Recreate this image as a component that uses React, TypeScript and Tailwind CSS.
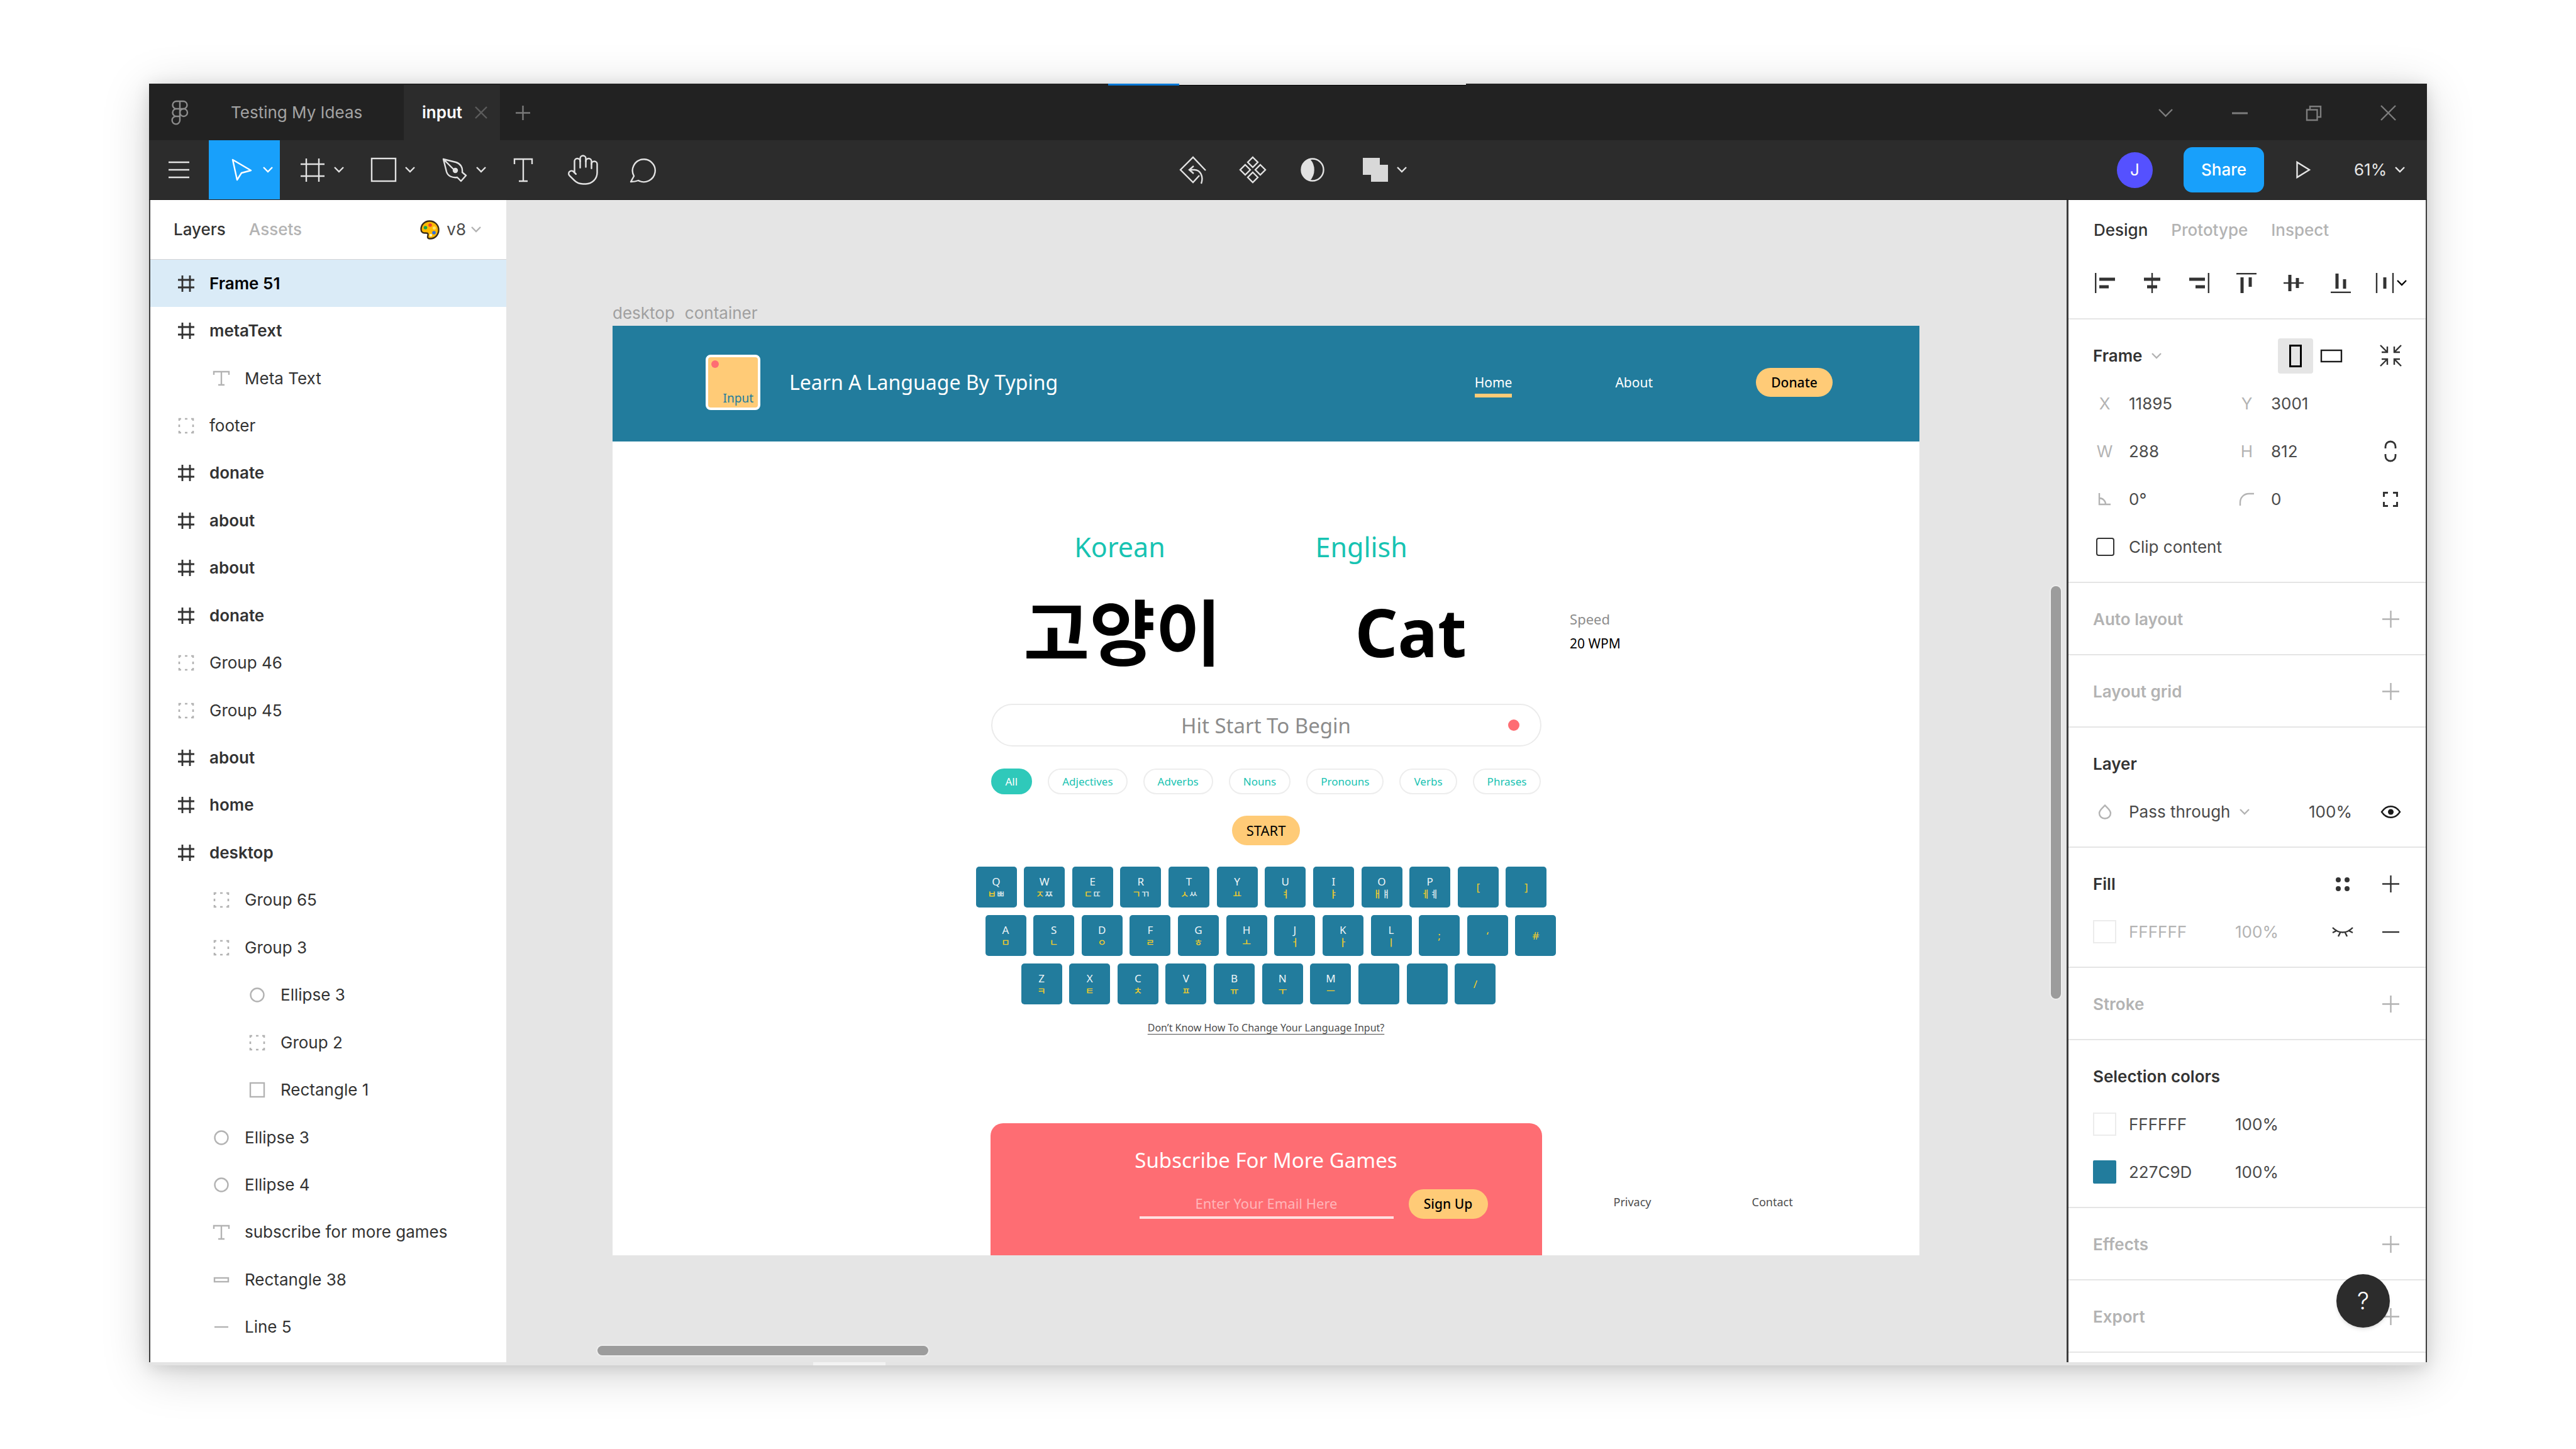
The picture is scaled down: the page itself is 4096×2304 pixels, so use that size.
import type { ReactNode } from "react";
import { Hand } from "lucide-react";

/* ---------- icons ---------- */

type IconProps = { w: number; h: number; children: ReactNode; className?: string; stroke?: number };

function Icon({ w, h, children, className = "", stroke = 2.4 }: IconProps) {
  return (
    <svg
      width={w}
      height={h}
      viewBox={`0 0 ${w} ${h}`}
      fill="none"
      stroke="currentColor"
      strokeWidth={stroke}
      aria-hidden="true"
      className={`shrink-0 overflow-visible ${className}`}
    >
      {children}
    </svg>
  );
}

const Chevron = ({ className = "" }: { className?: string }) => (
  <Icon w={16} h={10} className={className}>
    <path d="M1 1l7 7 7-7" />
  </Icon>
);

const FigmaLogo = () => (
  <Icon w={26} h={39} className="text-[#8c8c8c]">
    <path d="M13 1H7.500a6 6 0 0 0 0 12H13ZM13 1h5.500a6 6 0 0 1 0 12H13M13 13H7.500a6 6 0 0 0 0 12H13ZM13 25H7.500A6.200 6.200 0 1 0 13 31.500Z" />
    <circle cx="19" cy="19" r="6" />
  </Icon>
);

const FrameIcon = ({ big = false }: { big?: boolean }) =>
  big ? (
    <Icon w={38} h={37}>
      <path d="M9 0v37M29 0v37M0 9h38M0 28h38" />
    </Icon>
  ) : (
    <Icon w={26} h={26} stroke={2.8}>
      <path d="M7 0v26M19 0v26M0 7h26M0 19h26" />
    </Icon>
  );

const TextIcon = () => (
  <Icon w={26} h={23}>
    <path d="M1 6V1h24v5M13 1v21M8 22h10" />
  </Icon>
);

const GroupIcon = () => (
  <Icon w={24} h={24} stroke={2.6}>
    <path d="M1 4V1h3M10 1h4M20 1h3v3M23 10v4M23 20v3h-3M14 23h-4M4 23H1v-3M1 14v-4" />
  </Icon>
);

const EllipseIcon = () => (
  <Icon w={24} h={24}>
    <circle cx="12" cy="12" r="10.500" />
  </Icon>
);

const RectIcon = () => (
  <Icon w={24} h={24}>
    <rect x="1" y="1" width="22" height="22" />
  </Icon>
);

const FlatRectIcon = () => (
  <Icon w={24} h={8}>
    <rect x="1" y="1" width="22" height="6" />
  </Icon>
);

const LineIcon = () => (
  <Icon w={22} h={2}>
    <path d="M0 1h22" />
  </Icon>
);

const Plus = () => (
  <Icon w={27} h={27}>
    <path d="M13.500 0v27M0 13.500h27" />
  </Icon>
);

const Palette = () => (
  <svg width="31" height="31" viewBox="0 0 31 31" aria-hidden="true" className="shrink-0">
    <path
      d="M15 1.500C7 1.500 1.500 7.500 1.500 14.500c0 4 2.500 6 5.500 6 2.500 0 5-.6 5.500 1.500.4 2-.5 3-.5 5 0 1.700 1.500 2.500 4 2.500C24 29.500 29.500 23 29.500 15.500 29.500 7.500 23 1.500 15 1.500Z"
      fill="#ffb900"
      stroke="#3a2d1a"
      strokeWidth="2.400"
    />
    <circle cx="8.500" cy="12" r="2.800" fill="#16a34a" />
    <circle cx="16" cy="8" r="2.800" fill="#f0442c" />
    <circle cx="22.500" cy="12.500" r="2.600" fill="#ffe066" />
    <circle cx="22" cy="20" r="2.800" fill="#2f6fe0" />
    <circle cx="17" cy="24" r="2.200" fill="#fff3c4" />
  </svg>
);

/* ---------- title bar and toolbar ---------- */

function TabBar() {
  return (
    <div className="relative flex h-[90px] items-stretch bg-[#222222] text-[26px] leading-8">
      <div aria-hidden="true" className="absolute left-[1525px] top-0 flex h-[3px] w-[569px]">
        <span className="h-full w-[113px] bg-[#0078d7]" />
        <span className="h-full flex-1 border-b border-black bg-[#e4e4e4]" />
      </div>
      <button aria-label="Home" className="flex w-[98px] items-center justify-center pt-[2px]">
        <FigmaLogo />
      </button>
      <button className="w-[307px] pl-8 pt-[2px] text-left text-[#a3a3a3]">Testing My Ideas</button>
      <div className="mt-[2px] flex w-[153px] items-center gap-5 bg-[#2c2c2c] pl-[29px]">
        <button className="font-semibold text-white">input</button>
        <button aria-label="Close tab" className="text-[#5c5c5c]">
          <Icon w={20} h={20}>
            <path d="M1 1l18 18M19 1L1 19" />
          </Icon>
        </button>
      </div>
      <button aria-label="New tab" className="flex w-[72px] items-center justify-center pt-[2px] text-[#7a7a7a]">
        <Icon w={23} h={23}>
          <path d="M11.500 0v23M0 11.500h23" />
        </Icon>
      </button>
      <div className="ml-auto flex items-center pr-[3px] pt-[3px] text-[#7d7d7d]">
        <button aria-label="Tab list" className="flex w-[118px] justify-center">
          <Icon w={23} h={13}>
            <path d="M1 1l10.500 10.500L22 1" />
          </Icon>
        </button>
        <button aria-label="Minimize" className="flex h-8 w-[118px] items-center justify-center">
          <Icon w={25} h={2} stroke={3}>
            <path d="M0 1h25" />
          </Icon>
        </button>
        <button aria-label="Restore" className="flex w-[118px] justify-center">
          <Icon w={24} h={24}>
            <path d="M1 6.500h16.500V23H1ZM6 6V1.200h17V18h-5" />
          </Icon>
        </button>
        <button aria-label="Close window" className="flex w-[118px] justify-center">
          <Icon w={25} h={25}>
            <path d="M1 1l23 23M24 1L1 24" />
          </Icon>
        </button>
      </div>
    </div>
  );
}

function ToolWithMenu({ label, active = false, children }: { label: string; active?: boolean; children: ReactNode }) {
  return (
    <button
      aria-label={label}
      className={`flex w-[113px] items-center ${active ? "bg-[#18a0fb] text-white" : "text-[#e2e2e2]"}`}
    >
      <span className="ml-[30px] flex w-11 justify-center">{children}</span>
      <Chevron className="ml-3" />
    </button>
  );
}

function Tool({ label, children }: { label: string; children: ReactNode }) {
  return (
    <button aria-label={label} className="flex w-[95px] items-center justify-center text-[#e2e2e2]">
      {children}
    </button>
  );
}

function Toolbar() {
  return (
    <div className="flex h-[95px] items-stretch justify-between border-b border-[#1c1c1c] bg-[#2c2c2c]">
      <div className="flex flex-1">
        <Tool label="Main menu">
          <Icon w={33} h={28}>
            <path d="M0 2h33M0 14h33M0 26h33" />
          </Icon>
        </Tool>
        <ToolWithMenu label="Move" active>
          <Icon w={31} h={34}>
            <path d="M1 1l29 17-15 4-7 11Z" strokeLinejoin="round" />
          </Icon>
        </ToolWithMenu>
        <ToolWithMenu label="Frame">
          <FrameIcon big />
        </ToolWithMenu>
        <ToolWithMenu label="Rectangle">
          <Icon w={40} h={38}>
            <rect x="1" y="1" width="38" height="36" />
          </Icon>
        </ToolWithMenu>
        <ToolWithMenu label="Pen">
          <Icon w={38} h={37}>
            <path d="M1 1l20 5c7 2 11 8 10 16l6 5-8 9-6-6C15 31 8 28 6 21ZM1 1l17 17" strokeLinejoin="round" />
            <circle cx="20" cy="19" r="3" fill="currentColor" />
          </Icon>
        </ToolWithMenu>
        <Tool label="Text">
          <Icon w={30} h={37}>
            <path d="M1 9V1h28v8M15 1v35M8 36h14" />
          </Icon>
        </Tool>
        <Tool label="Hand">
          <Hand size={54} strokeWidth={1.1} aria-hidden="true" />
        </Tool>
        <Tool label="Comment">
          <Icon w={42} h={39}>
            <path d="M2 38l5-9a18 18 0 1 1 7 7q-5 2-12 2Z" strokeLinejoin="round" />
          </Icon>
        </Tool>
      </div>
      <div className="flex pl-9">
        <Tool label="Reset instance">
          <Icon w={42} h={42}>
            <path d="M41 22L21 1 1 21l20 20 10-11M16 21h7c10 0 15 11 11 22M22 15l-7 6 7 6" />
          </Icon>
        </Tool>
        <Tool label="Create component">
          <Icon w={42} h={42}>
            <path d="M21 1l8 8-8 8-8-8ZM21 25l8 8-8 8-8-8ZM9 13l8 8-8 8-8-8ZM33 13l8 8-8 8-8-8Z" />
          </Icon>
        </Tool>
        <Tool label="Use as mask">
          <Icon w={38} h={38}>
            <circle cx="19" cy="19" r="17.500" />
            <path d="M14 2.500a17.500 17.500 0 0 0 0 33 24 24 0 0 0 0-33Z" fill="currentColor" />
          </Icon>
        </Tool>
        <ToolWithMenu label="Boolean groups">
          <Icon w={40} h={38}>
            <path d="M0 0h27v11h13v27H13V27H0Z" fill="#d8d8d8" stroke="none" />
          </Icon>
        </ToolWithMenu>
      </div>
      <div className="flex flex-1 items-center justify-end pr-[35px] text-[26px] leading-8 text-[#e6e6e6]">
        <span className="flex size-[57px] items-center justify-center rounded-full bg-[#5551ff] text-white">J</span>
        <button className="ml-[49px] h-[72px] w-[128px] rounded-[14px] bg-[#18a0fb] font-medium text-white">Share</button>
        <button aria-label="Present" className="ml-[51px]">
          <Icon w={23} h={28}>
            <path d="M1.500 2v24L21 14Z" />
          </Icon>
        </button>
        <select aria-label="Zoom" defaultValue="61" className="ml-[69px] appearance-none bg-transparent outline-none">
          <option value="61">61%</option>
        </select>
        <Chevron className="ml-3" />
      </div>
    </div>
  );
}

/* ---------- layers panel ---------- */

type Kind = "frame" | "text" | "group" | "ellipse" | "rect" | "flat" | "line";
type Layer = { name: string; kind: Kind; depth: 0 | 1 | 2; selected?: boolean };

const layers: Layer[] = [
  { name: "Frame 51", kind: "frame", depth: 0, selected: true },
  { name: "metaText", kind: "frame", depth: 0 },
  { name: "Meta Text", kind: "text", depth: 1 },
  { name: "footer", kind: "group", depth: 0 },
  { name: "donate", kind: "frame", depth: 0 },
  { name: "about", kind: "frame", depth: 0 },
  { name: "about", kind: "frame", depth: 0 },
  { name: "donate", kind: "frame", depth: 0 },
  { name: "Group 46", kind: "group", depth: 0 },
  { name: "Group 45", kind: "group", depth: 0 },
  { name: "about", kind: "frame", depth: 0 },
  { name: "home", kind: "frame", depth: 0 },
  { name: "desktop", kind: "frame", depth: 0 },
  { name: "Group 65", kind: "group", depth: 1 },
  { name: "Group 3", kind: "group", depth: 1 },
  { name: "Ellipse 3", kind: "ellipse", depth: 2 },
  { name: "Group 2", kind: "group", depth: 2 },
  { name: "Rectangle 1", kind: "rect", depth: 2 },
  { name: "Ellipse 3", kind: "ellipse", depth: 1 },
  { name: "Ellipse 4", kind: "ellipse", depth: 1 },
  { name: "subscribe for more games", kind: "text", depth: 1 },
  { name: "Rectangle 38", kind: "flat", depth: 1 },
  { name: "Line 5", kind: "line", depth: 1 },
];

const layerIcons: Record<Kind, ReactNode> = {
  frame: <FrameIcon />,
  text: <TextIcon />,
  group: <GroupIcon />,
  ellipse: <EllipseIcon />,
  rect: <RectIcon />,
  flat: <FlatRectIcon />,
  line: <LineIcon />,
};

const depthPadding = ["pl-[39px]", "pl-[95px]", "pl-[152px]"];

function LayersPanel() {
  return (
    <aside className="flex w-[568px] shrink-0 flex-col border-l-2 border-[#3c3c3c] bg-white text-[26px] leading-8">
      <div className="flex h-[95px] shrink-0 items-center border-b border-[#d4d4d4] pl-[37px] pr-10">
        <button className="font-medium text-[#333333]">Layers</button>
        <button className="ml-[37px] font-medium text-[#b3b3b3]">Assets</button>
        <button className="ml-auto flex items-center text-[#4a4a4a]">
          <Palette />
          <span className="ml-[11px]">v8</span>
          <Chevron className="ml-2 text-[#b3b3b3]" />
        </button>
      </div>
      <ul className="grid flex-1 auto-rows-fr pb-[18px]">
        {layers.map((l, i) => (
          <li key={i} className="flex">
            <button
              className={`flex flex-1 items-center gap-[19px] text-left ${depthPadding[l.depth]} ${
                l.selected ? "bg-[#daebf7] text-black" : "text-[#333333]"
              } ${l.kind === "frame" ? "font-semibold" : ""}`}
            >
              <span
                className={`flex w-9 shrink-0 justify-center ${l.kind === "frame" ? "text-[#333333]" : "text-[#b3b3b3]"}`}
              >
                {layerIcons[l.kind]}
              </span>
              {l.name}
            </button>
          </li>
        ))}
      </ul>
    </aside>
  );
}

/* ---------- design panel ---------- */

function Section({ children }: { children: ReactNode }) {
  return <section className="flex flex-col gap-px py-5 shadow-[inset_0_-2px_0_#e5e5e5]">{children}</section>;
}

function Row({ children }: { children: ReactNode }) {
  return <div className="flex h-[75px] items-center pl-[39px] pr-7">{children}</div>;
}

function IconButton({ label, children, className = "" }: { label: string; children: ReactNode; className?: string }) {
  return (
    <button aria-label={label} className={`flex size-14 shrink-0 items-center justify-center ${className}`}>
      {children}
    </button>
  );
}

function Field({ label, value, icon, wide = true }: { label: string; value: string; icon?: ReactNode; wide?: boolean }) {
  return (
    <label className={`flex shrink-0 items-center gap-5 ${wide ? "w-[226px]" : "w-[190px]"}`}>
      <span className="flex w-[37px] shrink-0 justify-center text-[#b3b3b3]">{icon ?? label}</span>
      <input aria-label={label} defaultValue={value} className="w-full min-w-0 bg-transparent text-[#4a4a4a] outline-none" />
    </label>
  );
}

function EmptySection({ title }: { title: string }) {
  return (
    <Section>
      <Row>
        <h3 className="font-semibold text-[#b3b3b3]">{title}</h3>
        <IconButton label={`Add ${title}`} className="ml-auto text-[#b3b3b3]">
          <Plus />
        </IconButton>
      </Row>
    </Section>
  );
}

function ColorRow({ hex, muted = false, filled = false, children }: { hex: string; muted?: boolean; filled?: boolean; children?: ReactNode }) {
  const tone = muted ? "text-[#b3b3b3]" : "text-[#4a4a4a]";
  return (
    <Row>
      <button
        aria-label={`Colour ${hex}`}
        className={`size-[37px] shrink-0 ${filled ? "rounded-[2px] bg-[#227c9d]" : "border-2 border-[#ececec] bg-white"}`}
      />
      <input aria-label="Hex" defaultValue={hex} className={`ml-5 w-[169px] bg-transparent outline-none ${tone}`} />
      <input aria-label="Opacity" defaultValue="100%" className={`w-20 bg-transparent outline-none ${tone}`} />
      <div className="ml-auto flex gap-5">{children}</div>
    </Row>
  );
}

const alignIcons: [string, ReactNode][] = [
  ["Align left", <Icon w={32} h={32} key="l"><path d="M1.200 0v32" /><path d="M7 10h25M7 22h15" strokeWidth="5" /></Icon>],
  ["Align horizontal centers", <Icon w={32} h={32} key="c"><path d="M16 0v32" /><path d="M3 10h26M8 22h16" strokeWidth="5" /></Icon>],
  ["Align right", <Icon w={32} h={32} key="r"><path d="M30.800 0v32" /><path d="M0 10h25M10 22h15" strokeWidth="5" /></Icon>],
  ["Align top", <Icon w={32} h={32} key="t"><path d="M0 1.200h32" /><path d="M9 7v25M22 7v15" strokeWidth="5" /></Icon>],
  ["Align vertical centers", <Icon w={32} h={32} key="m"><path d="M0 16h32" /><path d="M10 3v26M22 8v16" strokeWidth="5" /></Icon>],
  ["Align bottom", <Icon w={32} h={32} key="b"><path d="M0 30.800h32" /><path d="M10 1v24M22 10v15" strokeWidth="5" /></Icon>],
];

function DesignPanel() {
  return (
    <aside className="flex w-[573px] shrink-0 flex-col overflow-hidden border-l-[3px] border-r-2 border-[#3c3c3c] bg-white text-[26px] leading-8">
      <div className="flex h-[95px] shrink-0 items-center gap-[37px] pl-10 font-medium text-[#b3b3b3]">
        <button className="text-[#333333]">Design</button>
        <button>Prototype</button>
        <button>Inspect</button>
      </div>
      <div className="flex h-[95px] shrink-0 items-start gap-[19px] pl-[30px] text-[#333333] shadow-[inset_0_-2px_0_#e5e5e5]">
        {alignIcons.map(([label, icon]) => (
          <button key={label} aria-label={label} className="flex h-[73px] w-14 items-center justify-center">
            {icon}
          </button>
        ))}
        <button aria-label="Distribute" className="flex h-[73px] w-14 items-center">
          <Icon w={56} h={32}>
            <path d="M10 0v32M36 0v32" />
            <path d="M23 7v18" strokeWidth="5" />
            <path d="M43 12l7 7 7-7" stroke="#000000" />
          </Icon>
        </button>
      </div>

      <Section>
        <Row>
          <select aria-label="Frame preset" className="appearance-none bg-transparent font-semibold text-[#333333] outline-none">
            <option>Frame</option>
          </select>
          <Chevron className="ml-[14px] text-[#b3b3b3]" />
          <div className="ml-auto flex text-[#1a1a1a]">
            <IconButton label="Portrait" className="rounded bg-[#e5e5e5]">
              <Icon w={20} h={36} stroke={3} className="text-black">
                <rect x="1.500" y="1.500" width="17" height="33" />
              </Icon>
            </IconButton>
            <IconButton label="Landscape" className="ml-px">
              <Icon w={34} h={20}>
                <rect x="1" y="1" width="32" height="18" />
              </Icon>
            </IconButton>
            <IconButton label="Resize to fit" className="ml-[38px]">
              <Icon w={35} h={35} className="text-[#333333]">
                <path d="M1 1l11 11M12 3v9H3M34 1L23 12M23 3v9h9M1 34l11-11M3 23h9v9M34 34L23 23M23 32v-9h9" />
              </Icon>
            </IconButton>
          </div>
        </Row>
        <Row>
          <Field label="X" value="11895" />
          <Field label="Y" value="3001" wide={false} />
        </Row>
        <Row>
          <Field label="W" value="288" />
          <Field label="H" value="812" wide={false} />
          <IconButton label="Constrain proportions" className="ml-auto text-[#333333]">
            <Icon w={18} h={33} stroke={2.8}>
              <path d="M1 12V9a8 8 0 0 1 16 0v3M1 21v3a8 8 0 0 0 16 0v-3" />
            </Icon>
          </IconButton>
        </Row>
        <Row>
          <Field
            label="Rotation"
            value="0°"
            icon={
              <Icon w={19} h={19}>
                <path d="M1 0v18h18M1 8a10 10 0 0 1 10 10" />
              </Icon>
            }
          />
          <Field
            label="Corner radius"
            value="0"
            wide={false}
            icon={
              <Icon w={23} h={20}>
                <path d="M1 20v-5C1 7 7 1 15 1h8" />
              </Icon>
            }
          />
          <IconButton label="Independent corners" className="ml-auto text-[#333333]">
            <Icon w={24} h={24} stroke={3}>
              <path d="M1.500 8V1.500H8M16 1.500h6.500V8M22.500 16v6.500H16M8 22.500H1.500V16" />
            </Icon>
          </IconButton>
        </Row>
        <Row>
          <label className="flex items-center gap-[23px] text-[#4a4a4a]">
            <input type="checkbox" className="ml-[5px] size-[29px] appearance-none rounded-[4px] border-2 border-[#333333] bg-white" />
            Clip content
          </label>
        </Row>
      </Section>

      <EmptySection title="Auto layout" />
      <EmptySection title="Layout grid" />

      <Section>
        <Row>
          <h3 className="font-semibold text-[#333333]">Layer</h3>
        </Row>
        <Row>
          <span className="flex w-[37px] justify-center text-[#b3b3b3]">
            <Icon w={20} h={23}>
              <path d="M10 1.500C7 5 1 9 1 14a9 8.500 0 0 0 18 0C19 9 13 5 10 1.500Z" />
            </Icon>
          </span>
          <select aria-label="Blend mode" className="ml-5 appearance-none bg-transparent text-[#4a4a4a] outline-none">
            <option>Pass through</option>
          </select>
          <Chevron className="ml-[14px] text-[#b3b3b3]" />
          <input aria-label="Layer opacity" defaultValue="100%" className="ml-auto w-[82px] bg-transparent text-[#4a4a4a] outline-none" />
          <IconButton label="Toggle visibility" className="ml-5 text-[#1a1a1a]">
            <Icon w={31} h={20}>
              <path d="M1 10C5 4 10 1.200 15.500 1.200S26 4 30 10c-4 6-9 8.800-14.500 8.800S5 16 1 10Z" />
              <circle cx="15.500" cy="10" r="4.500" fill="currentColor" stroke="none" />
            </Icon>
          </IconButton>
        </Row>
      </Section>

      <Section>
        <Row>
          <h3 className="font-semibold text-[#333333]">Fill</h3>
          <div className="ml-auto flex gap-5 text-[#333333]">
            <IconButton label="Styles">
              <Icon w={22} h={22}>
                <g fill="currentColor" stroke="none">
                  <circle cx="4" cy="4" r="4" />
                  <circle cx="18" cy="4" r="4" />
                  <circle cx="4" cy="18" r="4" />
                  <circle cx="18" cy="18" r="4" />
                </g>
              </Icon>
            </IconButton>
            <IconButton label="Add fill">
              <Plus />
            </IconButton>
          </div>
        </Row>
        <ColorRow hex="FFFFFF" muted>
          <IconButton label="Show fill" className="text-[#333333]">
            <Icon w={34} h={15}>
              <path d="M1 1c10 10 22 10 32 0M1 9l6-3M13 9l-3 6M21 9l3 6M33 9l-6-3" />
            </Icon>
          </IconButton>
          <IconButton label="Remove fill" className="text-[#333333]">
            <Icon w={27} h={2}>
              <path d="M0 1h27" />
            </Icon>
          </IconButton>
        </ColorRow>
      </Section>

      <EmptySection title="Stroke" />

      <Section>
        <Row>
          <h3 className="font-semibold text-[#333333]">Selection colors</h3>
        </Row>
        <ColorRow hex="FFFFFF" />
        <ColorRow hex="227C9D" filled />
      </Section>

      <EmptySection title="Effects" />
      <EmptySection title="Export" />
    </aside>
  );
}

/* ---------- artboard ---------- */

type Key = [latin: string, main: string, shifted?: string];

const keyRows: { className: string; keys: Key[] }[] = [
  {
    className: "w-[908px]",
    keys: [["Q", "ㅂ", "ㅃ"], ["W", "ㅈ", "ㅉ"], ["E", "ㄷ", "ㄸ"], ["R", "ㄱ", "ㄲ"], ["T", "ㅅ", "ㅆ"], ["Y", "ㅛ"], ["U", "ㅕ"], ["I", "ㅑ"], ["O", "ㅐ", "ㅒ"], ["P", "ㅔ", "ㅖ"], ["", "["], ["", "]"]],
  },
  {
    className: "ml-[15px] w-[908px]",
    keys: [["A", "ㅁ"], ["S", "ㄴ"], ["D", "ㅇ"], ["F", "ㄹ"], ["G", "ㅎ"], ["H", "ㅗ"], ["J", "ㅓ"], ["K", "ㅏ"], ["L", "ㅣ"], ["", ";"], ["", "‘"], ["", "#"]],
  },
  {
    className: "ml-[72px] w-[755px]",
    keys: [["Z", "ㅋ"], ["X", "ㅌ"], ["C", "ㅊ"], ["V", "ㅍ"], ["B", "ㅠ"], ["N", "ㅜ"], ["M", "ㅡ"], ["", ""], ["", ""], ["", "/"]],
  },
];

function Keyboard() {
  return (
    <div className="mx-auto mt-[34px] flex w-[923px] flex-col gap-3">
      {keyRows.map((row, r) => (
        <div key={r} className={`flex justify-between ${row.className}`}>
          {row.keys.map(([latin, main, shifted], i) => (
            <div
              key={i}
              className="flex size-[65px] flex-col items-center justify-center rounded-[5px] bg-[#227c9d] text-[17px] leading-5 text-[#eef5f8]"
            >
              {latin && <span>{latin}</span>}
              {main && (
                <span
                  lang="ko"
                  className={`flex text-[#f0cc2c] ${latin ? "font-['Noto_Sans_CJK_KR',sans-serif] text-[15px] font-medium leading-[18px]" : "text-[17px] leading-5"}`}
                >
                  {main}
                  {shifted && <span className="text-[#d6e5eb]">{shifted}</span>}
                </span>
              )}
            </div>
          ))}
        </div>
      ))}
    </div>
  );
}

const filters = ["All", "Adjectives", "Adverbs", "Nouns", "Pronouns", "Verbs", "Phrases"];

function Artboard() {
  return (
    <article className="flex min-h-0 flex-1 flex-col bg-white font-['Noto_Sans','Noto_Sans_CJK_KR',sans-serif] text-black">
      <header className="flex h-[184px] shrink-0 items-center bg-[#227c9d] pb-[5px] pl-[148px] pr-[138px] text-white">
        <div className="relative flex h-[88px] w-[87px] items-end justify-end rounded-lg border-4 border-white bg-[#ffcb77] pr-[7px] text-[19px] leading-[30px] text-[#227c9d]">
          <span className="absolute left-[5px] top-[5px] size-3 rounded-full bg-[#fe6d73]" />
          Input
        </div>
        <h1 className="ml-[46px] text-[32px] leading-[44px]">Learn A Language By Typing</h1>
        <nav className="ml-auto flex items-center gap-[164px] text-[21px] leading-8">
          <a href="#home" className="relative">
            Home
            <span className="absolute inset-x-0 top-[34px] h-[6px] bg-[#ffcb77]" />
          </a>
          <a href="#about">About</a>
          <button className="h-[46px] w-[122px] rounded-full bg-[#ffcb77] font-medium text-black">Donate</button>
        </nav>
      </header>

      <main>
        <div className="mx-auto flex w-[877px] pl-[53px] pt-[138px] text-[43px] leading-[60px] text-[#17c3b2]">
          <h2 className="w-[306px] text-center">Korean</h2>
          <h2 className="ml-[158px]">English</h2>
        </div>
        <div className="mx-auto mt-[44px] flex w-[877px] items-center whitespace-nowrap pl-[53px] font-bold leading-[120px]">
          <p lang="ko" className="w-[306px] shrink-0 pb-2 text-center font-['Noto_Sans_CJK_KR',sans-serif] text-[114px] leading-[112px]">
            고양이
          </p>
          <p className="ml-[221px] text-[106px]">Cat</p>
          <dl className="ml-[164px] text-[22px] font-normal leading-[39px]">
            <dt className="text-[#8c8c8c]">Speed</dt>
            <dd className="text-[21px]">20 WPM</dd>
          </dl>
        </div>
        <div className="relative mx-auto mt-[55px] w-[875px]">
          <input
            aria-label="Typing box"
            placeholder="Hit Start To Begin"
            className="h-[68px] w-full rounded-full border-2 border-[#ebebeb] bg-transparent text-center text-[33px] outline-none placeholder:text-[#8c8c8c] placeholder:opacity-100"
          />
          <span className="absolute right-[35px] top-[25px] size-[18px] rounded-full bg-[#fe6d73]" />
        </div>
        <div className="mx-auto mt-[35px] flex w-[875px] justify-between text-[17px] leading-[37px]">
          {filters.map((f) => (
            <button
              key={f}
              className={`rounded-full border-2 px-[21px] ${
                f === "All" ? "border-[#2fc9ba] bg-[#2fc9ba] text-white" : "border-[#ededed] text-[#17c3b2]"
              }`}
            >
              {f}
            </button>
          ))}
        </div>
        <button className="mx-auto mt-[34px] block h-[47px] w-[108px] rounded-full bg-[#ffcb77] text-[22px]">START</button>
        <Keyboard />
        <p className="mt-[25px] text-center text-[16px] leading-6">
          <a href="#help" className="text-[#4d4d4d] underline underline-offset-4">
            Don’t Know How To Change Your Language Input?
          </a>
        </p>
      </main>

      <footer className="mt-auto grid h-[210px] shrink-0 grid-cols-[1fr_877px_1fr] text-[#4d4d4d]">
        <form className="col-start-2 rounded-t-[20px] bg-[#fe6d73] pt-[37px]">
          <h2 className="text-center text-[33px] leading-[44px] text-white">Subscribe For More Games</h2>
          <div className="mt-6 flex items-center gap-6 pl-[237px]">
            <input
              type="email"
              aria-label="Email"
              placeholder="Enter Your Email Here"
              className="h-[46px] w-[404px] border-b-4 border-[#ffdfe0] bg-transparent text-center text-[22px] text-white outline-none placeholder:text-[#ffb6b9] placeholder:opacity-100"
            />
            <button type="button" className="h-[47px] w-[126px] rounded-full bg-[#ffcb77] text-[21px] font-medium text-black">
              Sign Up
            </button>
          </div>
        </form>
        <div className="flex gap-[160px] pl-[114px] pt-[113px] text-[18px] leading-6">
          <a href="#privacy">Privacy</a>
          <a href="#contact">Contact</a>
        </div>
      </footer>
    </article>
  );
}

function Canvas() {
  return (
    <div className="relative flex min-w-0 flex-1 flex-col bg-[#e5e5e5] pb-[170px] pl-[169px] pr-[234px] pt-[160px]">
      <div className="flex h-10 shrink-0 gap-4 text-[26px] leading-10 text-[#a0a0a0]">
        <span>desktop</span>
        <span>container</span>
      </div>
      <Artboard />
      <span className="absolute bottom-[578px] right-[9px] top-[614px] w-4 rounded-full bg-[#9c9c9c] ring-2 ring-[#eeeeee]" />
      <span className="absolute bottom-[11px] left-[145px] h-[15px] w-[526px] rounded-full bg-[#9c9c9c] ring-2 ring-[#eeeeee]" />
    </div>
  );
}

/* ---------- window ---------- */

export default function App() {
  return (
    <div className="flex h-screen w-full bg-white px-[237px] py-[133px] font-['Inter',sans-serif]">
      <div className="relative flex min-w-0 flex-1 flex-col shadow-[0_12px_70px_rgba(0,0,0,0.18),0_4px_24px_rgba(0,0,0,0.12)]">
        <TabBar />
        <Toolbar />
        <div className="flex min-h-0 flex-1">
          <LayersPanel />
          <Canvas />
          <DesignPanel />
        </div>
        <div className="h-[5px] shrink-0 bg-[#e4e4e4] pl-[1056px]">
          <div className="h-full w-[115px] bg-[#f3f3f3]" />
        </div>
        <button
          aria-label="Help"
          className="absolute bottom-[60px] right-[59px] size-[85px] rounded-full bg-[#2c2c2c] text-[38px] font-light text-white shadow-md"
        >
          ?
        </button>
      </div>
    </div>
  );
}
